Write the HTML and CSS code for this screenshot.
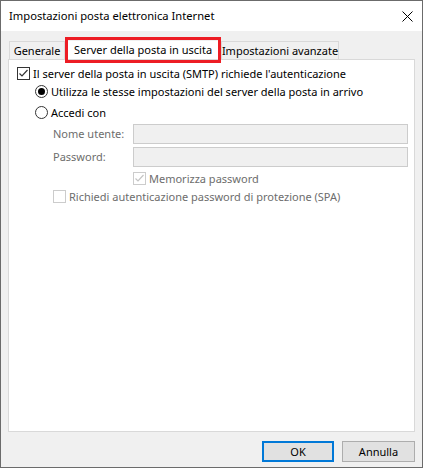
FILE: index.html
```html
<!DOCTYPE html>
<html lang="it">
<head>
<meta charset="utf-8">
<title>Impostazioni posta elettronica Internet</title>
<link rel="stylesheet" href="styles.css">
</head>
<body>
<div class="window">
  <div class="titlebar">
    <span class="title">Impostazioni posta elettronica Internet</span>
    <svg class="close" width="11" height="11" viewBox="0 0 11 11"><path d="M0.5 0.5 L10.5 10.5 M10.5 0.5 L0.5 10.5" stroke="#000" stroke-width="1" fill="none"/></svg>
  </div>
  <div class="client">
    <div class="tabs">
      <div class="tab tab-first">Generale</div>
      <div class="tab tab-active">Server della posta in uscita</div>
      <div class="tab tab-last">Impostazioni avanzate</div>
    </div>
    <div class="panel">
      <div class="row row-1">
        <svg class="box" width="13" height="13" viewBox="0 0 13 13"><rect x="0.5" y="0.5" width="12" height="12" fill="#fff" stroke="#333"/><path d="M2.5 6.5 L5 9 L10.5 3" stroke="#333" stroke-width="1.2" fill="none"/></svg>
        <span class="lbl">Il server della posta in uscita (SMTP) richiede l'autenticazione</span>
      </div>
      <div class="row row-2 indent-1">
        <svg class="box" width="13" height="13" viewBox="0 0 13 13"><circle cx="6.5" cy="6.5" r="6" fill="#fff" stroke="#333"/><circle cx="6.5" cy="6.5" r="3.5" fill="#000"/></svg>
        <span class="lbl">Utilizza le stesse impostazioni del server della posta in arrivo</span>
      </div>
      <div class="row row-3 indent-1">
        <svg class="box" width="13" height="13" viewBox="0 0 13 13"><circle cx="6.5" cy="6.5" r="6" fill="#fff" stroke="#333"/></svg>
        <span class="lbl">Accedi con</span>
      </div>
      <div class="field field-1 indent-2">
        <span class="flabel">Nome utente:</span>
        <div class="input"></div>
      </div>
      <div class="field field-2 indent-2">
        <span class="flabel">Password:</span>
        <div class="input"></div>
      </div>
      <div class="row row-6 indent-3">
        <svg class="box" width="13" height="13" viewBox="0 0 13 13"><rect x="0.5" y="0.5" width="12" height="12" fill="#fff" stroke="#ccc"/><path d="M2.5 6.5 L5 9 L10.5 3" stroke="#c4c4c4" stroke-width="1.2" fill="none"/></svg>
        <span class="lbl dis">Memorizza password</span>
      </div>
      <div class="row row-7 indent-2">
        <svg class="box" width="13" height="13" viewBox="0 0 13 13"><rect x="0.5" y="0.5" width="12" height="12" fill="#fff" stroke="#ccc"/></svg>
        <span class="lbl dis">Richiedi autenticazione password di protezione (SPA)</span>
      </div>
    </div>
    <div class="buttons">
      <div class="btn btn-default">OK</div>
      <div class="btn">Annulla</div>
    </div>
  </div>
</div>
</body>
</html>
```
FILE: styles.css
```css
html, body {
  margin: 0;
  padding: 0;
  background: #ffffff;
}
body {
  font-family: "Noto Sans", "Open Sans", sans-serif;
  font-size: 11px;
  color: #000;
}
.window {
  width: 423px;
  height: 468px;
  box-sizing: border-box;
  border: 1px solid #6b6b6b;
  display: flex;
  flex-direction: column;
  background: #f0f0f0;
}
.titlebar {
  height: 30px;
  background: #fff;
  display: flex;
  align-items: center;
  justify-content: space-between;
  padding: 0 9px 0 8px;
}
.title {
  font-size: 11.2px;
  line-height: 16px;
}
.close {
  display: block;
}
.client {
  flex: 1;
  display: flex;
  flex-direction: column;
  padding: 0 7px;
}
.tabs {
  display: flex;
  align-items: flex-end;
  margin-top: 10px;
  padding-left: 1px;
  height: 18px;
}
.tab {
  height: 18px;
  box-sizing: border-box;
  border: 1px solid #d9d9d9;
  border-bottom: none;
  background: #f0f0f0;
  display: flex;
  align-items: center;
  justify-content: center;
  line-height: 16px;
  white-space: nowrap;
}
.tab-first {
  width: 56px;
}
.tab-active {
  width: 156px;
  position: relative;
  background: #fff;
  border: none;
}
.tab-active::after {
  content: "";
  position: absolute;
  left: 0;
  right: 0;
  top: -4px;
  bottom: -4px;
  border: 3px solid #ed1c24;
}
.tab-last {
  width: 118px;
}
.panel {
  height: 371px;
  background: #fff;
  border: 1px solid #d9d9d9;
  display: flex;
  flex-direction: column;
  padding-left: 8px;
  padding-right: 6px;
}
.row {
  display: flex;
  align-items: center;
  height: 13px;
  white-space: nowrap;
}
.box {
  display: block;
  flex: none;
}
.lbl {
  margin-left: 3px;
  line-height: 16px;
}
.dis {
  color: #6d6d6d;
}
.row-1 { margin-top: 7px; }
.row-2 { margin-top: 5px; }
.row-3 { margin-top: 8px; }
.field-1 { margin-top: 5px; }
.field-2 { margin-top: 3px; }
.row-6 { margin-top: 5px; }
.row-7 { margin-top: 5px; }
.indent-1 { padding-left: 18px; }
.indent-2 { padding-left: 36px; }
.indent-3 { padding-left: 116px; }
.field {
  display: flex;
  align-items: center;
  height: 20px;
}
.flabel {
  width: 80px;
  flex: none;
  color: #6d6d6d;
  line-height: 16px;
}
.input {
  flex: 1;
  height: 20px;
  box-sizing: border-box;
  border: 1px solid #cccccc;
  background: #f0f0f0;
}
.buttons {
  display: flex;
  justify-content: flex-end;
  gap: 8px;
  margin-top: 9px;
}
.btn {
  width: 73px;
  height: 21px;
  box-sizing: border-box;
  border: 1px solid #adadad;
  background: #e1e1e1;
  display: flex;
  align-items: center;
  justify-content: center;
  line-height: 16px;
}
.btn-default {
  width: 72px;
  border: 2px solid #0078d7;
}
```
